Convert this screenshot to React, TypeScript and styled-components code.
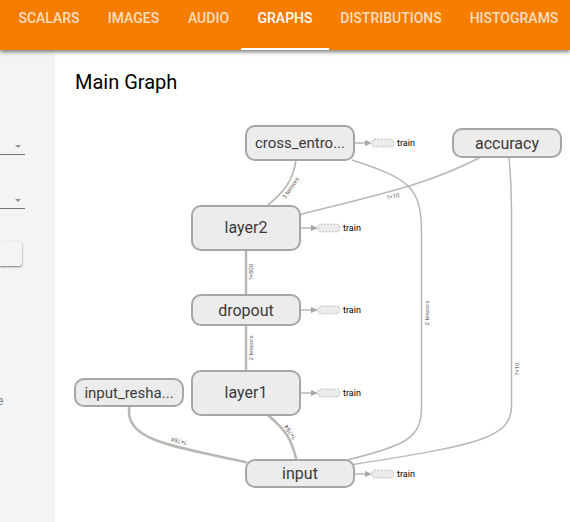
import React from 'react';
import styled, { createGlobalStyle } from 'styled-components';

const GlobalStyle = createGlobalStyle`
  * { box-sizing: border-box; }
  body { margin: 0; overflow: hidden; font-family: Roboto, "Liberation Sans", sans-serif; background: #fff; }
`;

const Page = styled.div`
  width: 570px;
  height: 522px;
  display: flex;
  flex-direction: column;
  overflow: hidden;
`;

const TabBar = styled.nav`
  position: relative;
  z-index: 1;
  flex: 0 0 50px;
  display: flex;
  padding-left: 5px;
  background: #f77d00;
  box-shadow: 0 2px 4px rgba(0, 0, 0, 0.5);
`;

const Tab = styled.div<{ $width: number; $active?: boolean }>`
  position: relative;
  flex: 0 0 ${p => p.$width}px;
  height: 50px;
  line-height: 36px;
  text-align: center;
  font-size: 14px;
  font-weight: 500;
  white-space: nowrap;
  color: ${p => (p.$active ? '#fff' : '#fddebf')};
  &::after {
    content: '';
    display: ${p => (p.$active ? 'block' : 'none')};
    position: absolute;
    left: -2px;
    right: -2px;
    bottom: 0;
    height: 2px;
    background: #fff;
  }
`;

const Body = styled.div`
  flex: 1;
  display: flex;
  min-height: 0;
`;

const Sidebar = styled.aside`
  flex: 0 0 55px;
  display: flex;
  flex-direction: column;
  background: #f4f4f4;
`;

const Select = styled.div`
  width: 25px;
  height: 54px;
  display: flex;
  align-items: flex-end;
  justify-content: flex-end;
  padding: 0 4px 5px 0;
  border-bottom: 1px solid #757575;
`;

const Caret = styled.i`
  border: 3.5px solid transparent;
  border-top-color: #949494;
  border-bottom-width: 0;
  margin-bottom: 1px;
`;

const SidebarTop = styled.div`
  height: 51px;
`;

const UploadButton = styled.div`
  width: 22px;
  height: 25px;
  margin-top: 32px;
  border-radius: 0 3px 3px 0;
  background: #f4f4f4;
  box-shadow: 0 1px 2px rgba(0, 0, 0, 0.5);
`;

const SideLabel = styled.span`
  margin: 127px 0 0 -3px;
  font-size: 12px;
  line-height: 16px;
  color: #75808c;
`;

const Main = styled.main`
  position: relative;
  flex: 1;
  background: #fff;
`;

const Title = styled.h1`
  margin: 0;
  padding: 20px 0 0 20px;
  font-size: 20px;
  line-height: 24px;
  font-weight: 400;
  color: #000;
`;

const Canvas = styled.div`
  position: absolute;
  inset: 0;
`;

const Edges = styled.svg`
  position: absolute;
  inset: 0;
  path { fill: none; stroke: #b8b8b8; }
  text { font-size: 6px; fill: #666; text-anchor: middle; }
`;

const Node = styled.div<{ $x: number; $y: number; $h: number; $size: number }>`
  position: absolute;
  left: ${p => p.$x}px;
  top: ${p => p.$y}px;
  width: 110px;
  height: ${p => p.$h}px;
  display: flex;
  align-items: center;
  justify-content: center;
  border: 2px solid #a6a6a6;
  border-radius: 10px;
  background: #ececec;
  font-size: ${p => p.$size}px;
  color: #3b3b3b;
`;

const ExpandIcon = styled.svg`
  position: absolute;
  top: 6px;
  right: 5px;
  fill: none;
  stroke: #e8e8e8;
`;

const Annotation = styled.div<{ $x: number; $y: number }>`
  position: absolute;
  left: ${p => p.$x}px;
  top: ${p => p.$y}px;
  height: 12px;
  display: flex;
  align-items: center;
  font-size: 9px;
  color: #000;
  svg { display: block; margin-right: 3px; }
`;

const tabs = [
  { name: 'SCALARS', width: 88 },
  { name: 'IMAGES', width: 81 },
  { name: 'AUDIO', width: 69 },
  { name: 'GRAPHS', width: 84, active: true },
  { name: 'DISTRIBUTIONS', width: 128 },
  { name: 'HISTOGRAMS', width: 118 },
];

const nodes = [
  { name: 'cross_entro...', x: 190, y: 75, h: 36, size: 15 },
  { name: 'accuracy', x: 397, y: 78, h: 30, size: 16 },
  { name: 'layer2', x: 136, y: 154.5, h: 46, size: 16 },
  { name: 'dropout', x: 136, y: 244, h: 32, size: 16 },
  { name: 'layer1', x: 136, y: 320, h: 45.5, size: 16 },
  { name: 'input_resha...', x: 19, y: 328, h: 29, size: 15 },
  { name: 'input', x: 190, y: 409, h: 29, size: 16 },
];

const annotations = [
  { x: 300, y: 87 },
  { x: 246, y: 171.5 },
  { x: 246, y: 254 },
  { x: 246, y: 336.5 },
  { x: 300, y: 417.5 },
];

const edges = [
  { d: 'M241 110C238 133 226 144 213 155', w: 1.8 },
  { d: 'M297 110C352 128 366.500 136 366.500 181V358C366.500 388 350 396 292 410', w: 1.5 },
  { d: 'M426 107C374 134 330 143 245 164.500', w: 1.5 },
  { d: 'M454 107C456 128 456.500 137 456.500 160V356C456.500 388 422 395 298 414.500', w: 1.5 },
  { d: 'M191 200V245', w: 2.5 },
  { d: 'M191 276V321', w: 2.5 },
  { d: 'M74 356V362C74 390 116 396 192 412.500', w: 2.5 },
  { d: 'M213 365C230 380 236 387 241.500 410', w: 2.5 },
];

const edgeLabels = [
  { text: '3 tensors', x: 237.5, y: 139, r: -56 },
  { text: '?×10', x: 338.5, y: 148.5, r: -13 },
  { text: '?×500', x: 198, y: 222, r: -90 },
  { text: '2 tensors', x: 198, y: 298, r: -90 },
  { text: '2 tensors', x: 374, y: 263, r: -90 },
  { text: '?×10', x: 464, y: 319, r: -90 },
  { text: '?×784', x: 124.5, y: 389, r: 193 },
  { text: '?×784', x: 237, y: 381, r: 236 },
];

const TrainLink = () => (
  <svg width="39" height="10" viewBox="0 0 39 10">
    <path d="M0 5H12" stroke="#a6a6a6" strokeWidth="1.2" />
    <path d="M10 1.900L17 5L10 8.100Z" fill="#a6a6a6" />
    <rect x="17" y="1.200" width="21.500" height="7.600" rx="2.500" fill="#ececec" stroke="#a6a6a6" strokeWidth=".8" strokeDasharray="1.800 1.500" />
  </svg>
);

export default function App() {
  return (
    <Page>
      <GlobalStyle />
      <TabBar>
        {tabs.map(t => (
          <Tab key={t.name} $width={t.width} $active={t.active}>{t.name}</Tab>
        ))}
      </TabBar>
      <Body>
        <Sidebar>
          <SidebarTop />
          <Select><Caret /></Select>
          <Select><Caret /></Select>
          <UploadButton />
          <SideLabel>e</SideLabel>
        </Sidebar>
        <Main>
          <Title>Main Graph</Title>
          <Canvas>
            <Edges width="515" height="472">
              {edges.map(e => <path key={e.d} d={e.d} strokeWidth={e.w} />)}
              {edgeLabels.map((l, i) => (
                <text key={i} transform={`translate(${l.x} ${l.y}) rotate(${l.r})`}>{l.text}</text>
              ))}
            </Edges>
            {nodes.map(n => (
              <Node key={n.name} $x={n.x} $y={n.y} $h={n.h} $size={n.size}>
                {n.name}
                <ExpandIcon width="9" height="9" viewBox="0 0 9 9">
                  <circle cx="4.500" cy="4.500" r="4" />
                  <path d="M4.500 2V7M2 4.500H7" />
                </ExpandIcon>
              </Node>
            ))}
            {annotations.map((a, i) => (
              <Annotation key={i} $x={a.x} $y={a.y}><TrainLink />train</Annotation>
            ))}
          </Canvas>
        </Main>
      </Body>
    </Page>
  );
}
